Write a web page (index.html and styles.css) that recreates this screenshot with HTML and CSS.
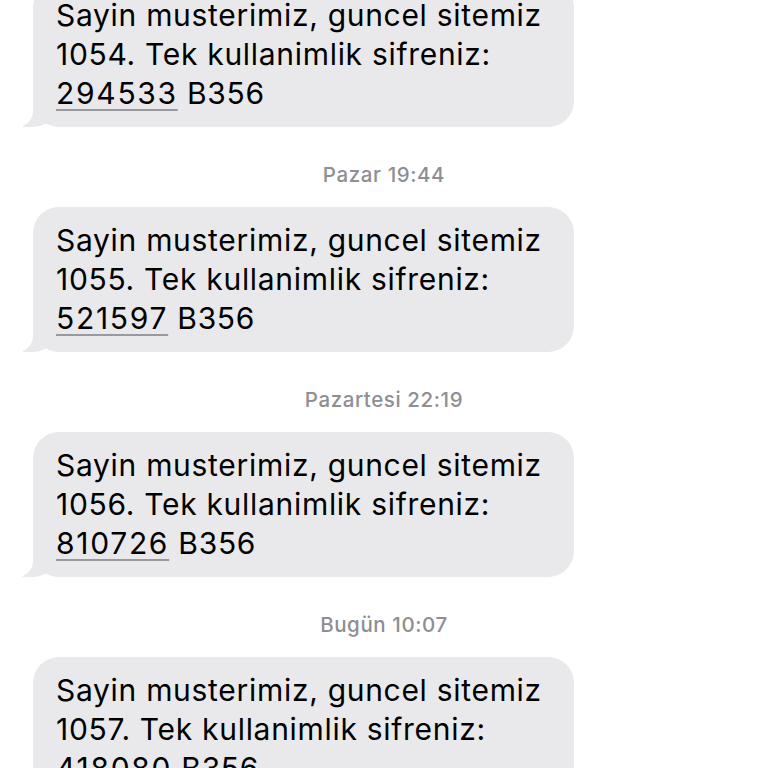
FILE: index.html
```html
<!DOCTYPE html>
<html lang="tr">
<head>
    <meta charset="UTF-8">
    <meta name="viewport" content="width=device-width, initial-scale=1.0">
    <title>Mesajlar</title>
    <link rel="stylesheet" href="styles.css">
</head>
<body>
    <div class="thread">
        <div class="bubble">
            Sayin musterimiz, guncel sitemiz 1054. Tek kullanimlik sifreniz: <span class="code">294533</span> B356
        </div>

        <div class="stamp">Pazar 19:44</div>
        <div class="bubble">
            Sayin musterimiz, guncel sitemiz 1055. Tek kullanimlik sifreniz: <span class="code">521597</span> B356
        </div>

        <div class="stamp">Pazartesi 22:19</div>
        <div class="bubble">
            Sayin musterimiz, guncel sitemiz 1056. Tek kullanimlik sifreniz: <span class="code">810726</span> B356
        </div>

        <div class="stamp">Bugün 10:07</div>
        <div class="bubble">
            Sayin musterimiz, guncel sitemiz 1057. Tek kullanimlik sifreniz: <span class="code">418080</span> B356
        </div>
    </div>
</body>
</html>
```

FILE: styles.css
```css
:root {
    --bubble: #e9e9eb;
    --stamp: #8e8e93;
}
html, body {
    margin: 0;
    background: #fff;
    overflow: hidden;
}
body {
    font-family: Inter, "Liberation Sans", sans-serif;
    color: #000;
}
.thread {
    display: flex;
    flex-direction: column;
    align-items: flex-start;
    margin-top: -18px;
    padding-left: 33px;
}
.bubble {
    position: relative;
    box-sizing: border-box;
    width: 541px;
    padding: 14px 24px 14px 23px;
    background: var(--bubble);
    border-radius: 26px;
    font-size: 30px;
    line-height: 39px;
    letter-spacing: 0.7px;
}
.bubble::before {
    content: "";
    position: absolute;
    bottom: 0;
    left: -10px;
    width: 34px;
    height: 30px;
    background: var(--bubble);
    border-bottom-right-radius: 24px;
}
.bubble::after {
    content: "";
    position: absolute;
    bottom: 0;
    left: -30px;
    width: 30px;
    height: 30px;
    background: #fff;
    border-bottom-right-radius: 16px;
}
.code {
    letter-spacing: 1.7px;
    text-decoration: underline;
    text-decoration-color: #9a9a9e;
    text-decoration-thickness: 1.5px;
    text-underline-offset: 5px;
}
.stamp {
    align-self: stretch;
    margin: 36px 0 20px -33px;
    text-align: center;
    font-size: 20.5px;
    line-height: 24px;
    font-weight: 500;
    letter-spacing: 0.6px;
    color: var(--stamp);
}
```
